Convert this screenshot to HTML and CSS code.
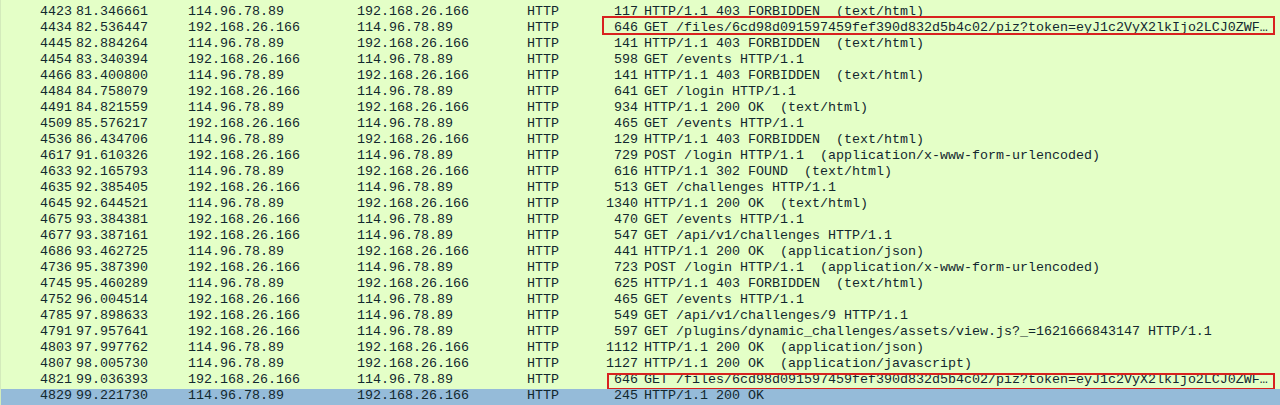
FILE: index.html
```html
<!DOCTYPE html>
<html>
<head>
<meta charset="utf-8">
<link rel="stylesheet" href="styles.css">
</head>
<body>
<div class="list">
  <div class="row"><span class="c-no">4423</span><span class="c-time">81.346661</span><span class="c-src">114.96.78.89</span><span class="c-dst">192.168.26.166</span><span class="c-proto">HTTP</span><span class="c-len">117</span><span class="c-info">HTTP/1.1 403 FORBIDDEN  (text/html)</span></div>
  <div class="row mark mark-a"><span class="c-no">4434</span><span class="c-time">82.536447</span><span class="c-src">192.168.26.166</span><span class="c-dst">114.96.78.89</span><span class="c-proto">HTTP</span><span class="c-len">646</span><span class="c-info">GET /files/6cd98d091597459fef390d832d5b4c02/piz?token=eyJ1c2VyX2lkIjo2LCJ0ZWF…</span></div>
  <div class="row"><span class="c-no">4445</span><span class="c-time">82.884264</span><span class="c-src">114.96.78.89</span><span class="c-dst">192.168.26.166</span><span class="c-proto">HTTP</span><span class="c-len">141</span><span class="c-info">HTTP/1.1 403 FORBIDDEN  (text/html)</span></div>
  <div class="row"><span class="c-no">4454</span><span class="c-time">83.340394</span><span class="c-src">192.168.26.166</span><span class="c-dst">114.96.78.89</span><span class="c-proto">HTTP</span><span class="c-len">598</span><span class="c-info">GET /events HTTP/1.1</span></div>
  <div class="row"><span class="c-no">4466</span><span class="c-time">83.400800</span><span class="c-src">114.96.78.89</span><span class="c-dst">192.168.26.166</span><span class="c-proto">HTTP</span><span class="c-len">141</span><span class="c-info">HTTP/1.1 403 FORBIDDEN  (text/html)</span></div>
  <div class="row"><span class="c-no">4484</span><span class="c-time">84.758079</span><span class="c-src">192.168.26.166</span><span class="c-dst">114.96.78.89</span><span class="c-proto">HTTP</span><span class="c-len">641</span><span class="c-info">GET /login HTTP/1.1</span></div>
  <div class="row"><span class="c-no">4491</span><span class="c-time">84.821559</span><span class="c-src">114.96.78.89</span><span class="c-dst">192.168.26.166</span><span class="c-proto">HTTP</span><span class="c-len">934</span><span class="c-info">HTTP/1.1 200 OK  (text/html)</span></div>
  <div class="row"><span class="c-no">4509</span><span class="c-time">85.576217</span><span class="c-src">192.168.26.166</span><span class="c-dst">114.96.78.89</span><span class="c-proto">HTTP</span><span class="c-len">465</span><span class="c-info">GET /events HTTP/1.1</span></div>
  <div class="row"><span class="c-no">4536</span><span class="c-time">86.434706</span><span class="c-src">114.96.78.89</span><span class="c-dst">192.168.26.166</span><span class="c-proto">HTTP</span><span class="c-len">129</span><span class="c-info">HTTP/1.1 403 FORBIDDEN  (text/html)</span></div>
  <div class="row"><span class="c-no">4617</span><span class="c-time">91.610326</span><span class="c-src">192.168.26.166</span><span class="c-dst">114.96.78.89</span><span class="c-proto">HTTP</span><span class="c-len">729</span><span class="c-info">POST /login HTTP/1.1  (application/x-www-form-urlencoded)</span></div>
  <div class="row"><span class="c-no">4633</span><span class="c-time">92.165793</span><span class="c-src">114.96.78.89</span><span class="c-dst">192.168.26.166</span><span class="c-proto">HTTP</span><span class="c-len">616</span><span class="c-info">HTTP/1.1 302 FOUND  (text/html)</span></div>
  <div class="row"><span class="c-no">4635</span><span class="c-time">92.385405</span><span class="c-src">192.168.26.166</span><span class="c-dst">114.96.78.89</span><span class="c-proto">HTTP</span><span class="c-len">513</span><span class="c-info">GET /challenges HTTP/1.1</span></div>
  <div class="row"><span class="c-no">4645</span><span class="c-time">92.644521</span><span class="c-src">114.96.78.89</span><span class="c-dst">192.168.26.166</span><span class="c-proto">HTTP</span><span class="c-len">1340</span><span class="c-info">HTTP/1.1 200 OK  (text/html)</span></div>
  <div class="row"><span class="c-no">4675</span><span class="c-time">93.384381</span><span class="c-src">192.168.26.166</span><span class="c-dst">114.96.78.89</span><span class="c-proto">HTTP</span><span class="c-len">470</span><span class="c-info">GET /events HTTP/1.1</span></div>
  <div class="row"><span class="c-no">4677</span><span class="c-time">93.387161</span><span class="c-src">192.168.26.166</span><span class="c-dst">114.96.78.89</span><span class="c-proto">HTTP</span><span class="c-len">547</span><span class="c-info">GET /api/v1/challenges HTTP/1.1</span></div>
  <div class="row"><span class="c-no">4686</span><span class="c-time">93.462725</span><span class="c-src">114.96.78.89</span><span class="c-dst">192.168.26.166</span><span class="c-proto">HTTP</span><span class="c-len">441</span><span class="c-info">HTTP/1.1 200 OK  (application/json)</span></div>
  <div class="row"><span class="c-no">4736</span><span class="c-time">95.387390</span><span class="c-src">192.168.26.166</span><span class="c-dst">114.96.78.89</span><span class="c-proto">HTTP</span><span class="c-len">723</span><span class="c-info">POST /login HTTP/1.1  (application/x-www-form-urlencoded)</span></div>
  <div class="row"><span class="c-no">4745</span><span class="c-time">95.460289</span><span class="c-src">114.96.78.89</span><span class="c-dst">192.168.26.166</span><span class="c-proto">HTTP</span><span class="c-len">625</span><span class="c-info">HTTP/1.1 403 FORBIDDEN  (text/html)</span></div>
  <div class="row"><span class="c-no">4752</span><span class="c-time">96.004514</span><span class="c-src">192.168.26.166</span><span class="c-dst">114.96.78.89</span><span class="c-proto">HTTP</span><span class="c-len">465</span><span class="c-info">GET /events HTTP/1.1</span></div>
  <div class="row"><span class="c-no">4785</span><span class="c-time">97.898633</span><span class="c-src">192.168.26.166</span><span class="c-dst">114.96.78.89</span><span class="c-proto">HTTP</span><span class="c-len">549</span><span class="c-info">GET /api/v1/challenges/9 HTTP/1.1</span></div>
  <div class="row"><span class="c-no">4791</span><span class="c-time">97.957641</span><span class="c-src">192.168.26.166</span><span class="c-dst">114.96.78.89</span><span class="c-proto">HTTP</span><span class="c-len">597</span><span class="c-info">GET /plugins/dynamic_challenges/assets/view.js?_=1621666843147 HTTP/1.1</span></div>
  <div class="row"><span class="c-no">4803</span><span class="c-time">97.997762</span><span class="c-src">114.96.78.89</span><span class="c-dst">192.168.26.166</span><span class="c-proto">HTTP</span><span class="c-len">1112</span><span class="c-info">HTTP/1.1 200 OK  (application/json)</span></div>
  <div class="row"><span class="c-no">4807</span><span class="c-time">98.005730</span><span class="c-src">114.96.78.89</span><span class="c-dst">192.168.26.166</span><span class="c-proto">HTTP</span><span class="c-len">1127</span><span class="c-info">HTTP/1.1 200 OK  (application/javascript)</span></div>
  <div class="row mark mark-b"><span class="c-no">4821</span><span class="c-time">99.036393</span><span class="c-src">192.168.26.166</span><span class="c-dst">114.96.78.89</span><span class="c-proto">HTTP</span><span class="c-len">646</span><span class="c-info">GET /files/6cd98d091597459fef390d832d5b4c02/piz?token=eyJ1c2VyX2lkIjo2LCJ0ZWF…</span></div>
  <div class="row selected"><span class="c-no">4829</span><span class="c-time">99.221730</span><span class="c-src">114.96.78.89</span><span class="c-dst">192.168.26.166</span><span class="c-proto">HTTP</span><span class="c-len">245</span><span class="c-info">HTTP/1.1 200 OK</span></div>
</div>
</body>
</html>
```
FILE: styles.css
```css
html, body {
  margin: 0;
  padding: 0;
}
body {
  background: #e4ffc7;
  overflow: hidden;
  width: 1280px;
  height: 405px;
}
.list {
  padding-top: 5px;
  border-left: 1px solid #d3ebbb;
  font-family: "Liberation Mono", monospace;
  font-size: 13.33px;
  color: #12272e;
}
.row {
  position: relative;
  display: grid;
  grid-template-columns: 75px 112px 169px 170px 70px 47px 1fr;
  height: 16px;
  line-height: 14px;
  padding-bottom: 2px;
  box-sizing: border-box;
  white-space: pre;
}
.row.selected {
  background: #95bbd9;
}
.c-no {
  text-align: right;
  padding-right: 4px;
}
.c-len {
  text-align: right;
  padding-right: 6px;
}
.c-info {
  overflow: hidden;
  padding-right: 6px;
}
.mark::after {
  content: "";
  position: absolute;
  right: 5px;
  border: 2px solid #d8221f;
  box-sizing: border-box;
  pointer-events: none;
}
.mark-a::after {
  left: 601px;
  top: -5px;
  height: 19px;
}
.mark-b::after {
  left: 606px;
  top: 0;
  height: 17px;
}
```
